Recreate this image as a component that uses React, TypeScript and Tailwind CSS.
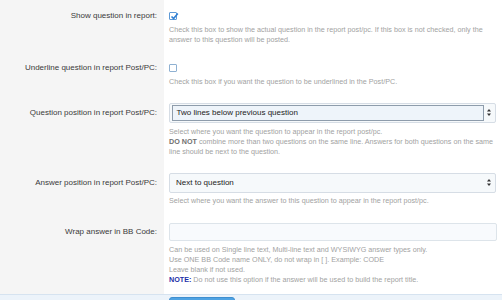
import React from "react";

const Arrows = () => (
  <svg width="4" height="7" viewBox="0 0 4 7" className="shrink-0">
    <path d="M2 0 L4 2.6 L0 2.6 Z" fill="#333" />
    <path d="M2 7 L4 4.4 L0 4.4 Z" fill="#333" />
  </svg>
);

const CheckedBox = () => (
  <div className="relative w-[8px] h-[8px] border border-[#5e9ad6] rounded-[1px] bg-white">
    <svg width="9" height="9" viewBox="0 0 9 9" className="absolute left-[-0.5px] top-[-1.5px]">
      <path d="M1.5 4.5 L3.6 6.6 L7.8 1.6" fill="none" stroke="#2f7fd3" strokeWidth="1.6" />
    </svg>
  </div>
);

const EmptyBox = () => (
  <div className="w-[8px] h-[8px] border border-[#8fb1d2] rounded-[1px] bg-white" />
);

function Row({
  label,
  pt,
  pb,
  ctrlH,
  children,
}: {
  label: string;
  pt: string;
  pb: string;
  ctrlH: string;
  children: React.ReactNode;
}) {
  return (
    <div className="flex">
      <div className={`w-[164px] shrink-0 bg-[#f5f5f5] pr-[7px] ${pt}`}>
        <div className={`flex items-center justify-end text-[8px] text-[#3a3a3a] ${ctrlH}`}>{label}</div>
      </div>
      <div className={`flex-1 pl-[5px] pr-[5px] ${pt} ${pb}`}>{children}</div>
    </div>
  );
}

export default function App() {
  return (
    <div className="w-[502px] h-[300px] overflow-hidden bg-white font-['Liberation_Sans',Arial,sans-serif]">
      <Row label="Show question in report:" pt="pt-[12px]" pb="pb-[7px]" ctrlH="h-[8px]">
        <CheckedBox />
        <div className="mt-[5px] text-[7.2px] leading-[10px] text-[#a2a2a2]">
          Check this box to show the actual question in the report post/pc. If this box is not checked, only the
          <br />
          answer to this question will be posted.
        </div>
      </Row>
      <Row label="Underline question in report Post/PC:" pt="pt-[12px]" pb="pb-[4px]" ctrlH="h-[8px]">
        <EmptyBox />
        <div className="mt-[4.5px] text-[7.2px] leading-[10px] text-[#a2a2a2]">
          Check this box if you want the question to be underlined in the Post/PC.
        </div>
      </Row>
      <Row label="Question position in report Post/PC:" pt="pt-[12px]" pb="pb-[4px]" ctrlH="h-[20px]">
        <div className="h-[20px] w-[327px] flex items-center border border-[#d6dde5] rounded-[2px] bg-[#f6f9fb] pl-[1.5px] pr-[2px]">
          <div className="flex-1 h-[16px] flex items-center border border-[#8e9cab] bg-[#eef4fa] pl-[4px] text-[8px] text-[#222]">
            Two lines below previous question
          </div>
          <div className="w-[9px] flex justify-center">
            <Arrows />
          </div>
        </div>
        <div className="mt-[4px] text-[7.2px] leading-[10px] text-[#a2a2a2]">
          Select where you want the question to appear in the report post/pc.
          <br />
          <span className="font-bold text-[#707070]">DO NOT</span> combine more than two questions on the same line. Answers for both questions on the same
          <br />
          line should be next to the question.
        </div>
      </Row>
      <Row label="Answer position in report Post/PC:" pt="pt-[12px]" pb="pb-[4px]" ctrlH="h-[20px]">
        <div className="h-[20px] w-[327px] flex items-center border border-[#d6dde5] rounded-[2px] bg-[#f6f9fb] pl-[6px] pr-[2px]">
          <div className="flex-1 text-[8px] text-[#222]">Next to question</div>
          <div className="w-[9px] flex justify-center">
            <Arrows />
          </div>
        </div>
        <div className="mt-[3px] text-[7.2px] leading-[10px] text-[#a2a2a2]">
          Select where you want the answer to this question to appear in the report post/pc.
        </div>
      </Row>
      <Row label="Wrap answer in BB Code:" pt="pt-[13px]" pb="pb-[9px]" ctrlH="h-[18px]">
        <div className="h-[18px] w-[328px] border border-[#dde4ea] rounded-[2px] bg-[#f8fafd]" />
        <div className="mt-[4.5px] text-[7.2px] leading-[10px] text-[#a2a2a2]">
          Can be used on Single line text, Multi-line text and WYSIWYG answer types only.
          <br />
          Use ONE BB Code name ONLY, do not wrap in [ ]. Example: CODE
          <br />
          Leave blank if not used.
          <br />
          <span className="font-bold text-[#1c2fa8]">NOTE:</span> Do not use this option if the answer will be used to build the report title.
        </div>
      </Row>
      <div className="h-[20px] border-t border-[#d6e3f0] bg-[#ecf3fa] pl-[169px] pt-[2px]">
        <div className="w-[66px] h-[12px] rounded-t-[3px] border border-[#3f8fd0] bg-[#4fa3e3]" />
      </div>
    </div>
  );
}
